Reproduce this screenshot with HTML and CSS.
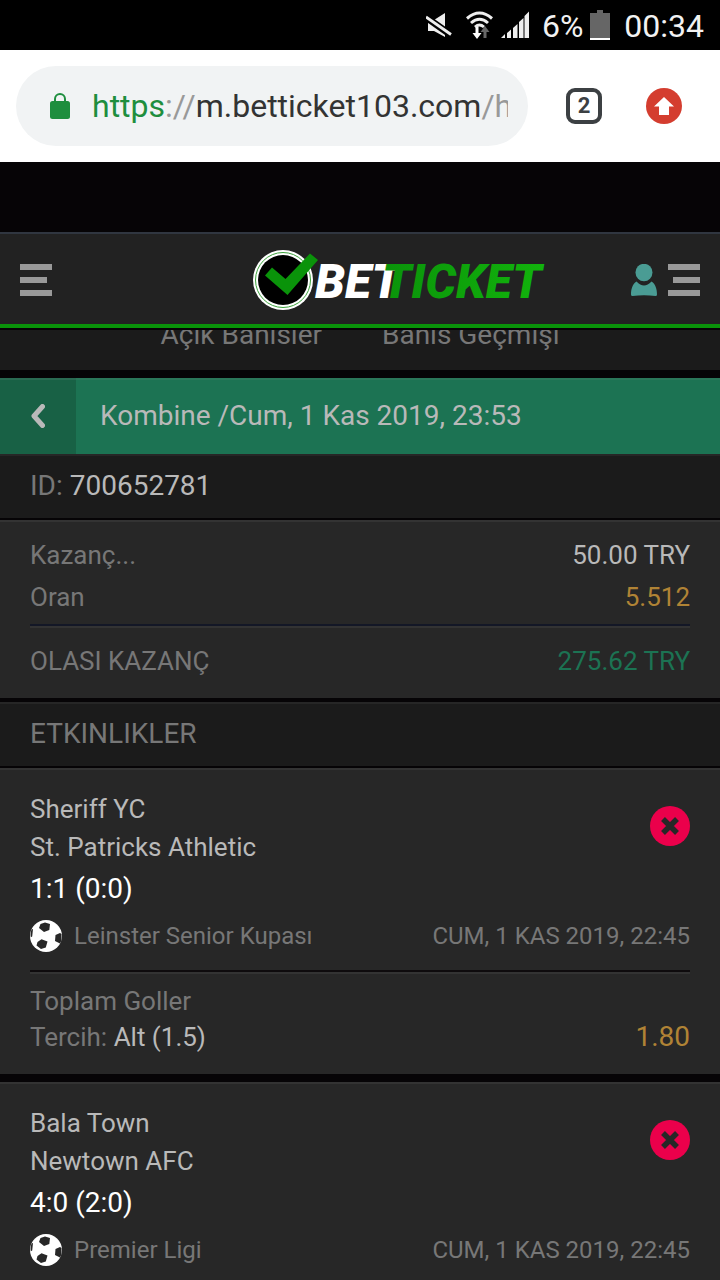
FILE: index.html
```html
<!DOCTYPE html>
<html lang="tr">
<head>
<meta charset="utf-8">
<meta name="viewport" content="width=device-width, initial-scale=1">
<title>Betticket</title>
<link rel="stylesheet" href="styles.css">
</head>
<body>
<svg class="defs" aria-hidden="true">
  <symbol id="ball" viewBox="0 0 32 32">
    <circle cx="16" cy="16" r="16" fill="#fff"/>
    <path d="M10.500 4l4.500-1.500 5 1.500-.7 6-5.300 2-5-4zM25.500 15l4.500-2 1.500 1v6.500l-1.500 3-5-2.500zM7.500 22l4-2.700 6 2.200-1.700 6-4.800 1.500-4.500-3.500zM1.500 9.500l1.500-.5-.8 7.500-1.400.8c-.5-2.500-.1-5 .7-7.800z" fill="#272727"/>
  </symbol>
  <symbol id="lost" viewBox="0 0 40 40">
    <circle cx="20" cy="20" r="20" fill="#eb004b"/>
    <path d="M13 13l14 14M27 13l-14 14" stroke="#272727" stroke-width="5.500"/>
  </symbol>
</svg>

<div class="status">
  <svg width="26" height="26" viewBox="0 0 26 26" aria-label="Sessiz">
    <path d="M2 8h6l11-7v24L8 19H2z" fill="#eee"/>
    <path d="M-1 4.500L25 23" stroke="#000" stroke-width="7"/>
    <path d="M0 5L25 22.500" stroke="#eee" stroke-width="2.800"/>
  </svg>
  <svg class="wifi" width="30" height="30" viewBox="0 0 30 30" aria-label="Wi-Fi">
    <path d="M2 8.500q12.500-11 25 0M6 13q8.500-7.500 17 0M10 17q4.500-4 9 0" fill="none" stroke="#eee" stroke-width="3"/>
    <path d="M10.500 17h3v6h3l-4.500 6-4.500-6h3z" fill="#fff"/>
    <path d="M18.500 28v-6h-3l4.500-6 4.500 6h-3v6z" fill="#666"/>
  </svg>
  <svg class="signal" width="28" height="28" viewBox="0 0 28 28" aria-label="Sinyal">
    <path d="M0 27l4-4v4zM6 22l4-3.500V27H6zM12 17l4.500-4V27H12zM18 11l4.500-4v20H18zM23.500 5l4.500-4.500V27h-4.500z" fill="#eee"/>
  </svg>
  <span class="charge">6%</span>
  <svg width="20" height="30" viewBox="0 0 20 30" aria-label="Pil">
    <path d="M7 0h6v3h7v25H0V3h7z" fill="#666"/><path d="M0 28h20v2H0z" fill="#fff"/>
  </svg>
  <time class="clock">00:34</time>
</div>

<div class="browser">
  <button class="address" type="button">
    <svg width="20" height="26" viewBox="0 0 20 26" aria-hidden="true">
      <path d="M5 10V6a5 5 0 0 1 10 0v4" fill="none" stroke="#1e8e3e" stroke-width="2"/>
      <rect y="8" width="20" height="18" rx="2.500" fill="#1e8e3e"/>
    </svg>
    <span class="url"><span class="secure">https</span><span class="faint">://</span>m.betticket103.com<span class="faint">/h</span></span>
  </button>
  <button class="tab-count" type="button" aria-label="Sekmeler">2</button>
  <button class="update" type="button" aria-label="Güncelle">
    <svg width="36" height="36" viewBox="0 0 36 36"><circle cx="18" cy="18" r="18" fill="#d43d2f"/><path d="M18 9l10 9.500h-5V27H13v-8.500H8z" fill="#fff"/></svg>
  </button>
</div>

<header class="site-head">
  <button class="icon-btn" type="button" aria-label="Menü">
    <svg width="32" height="32" viewBox="0 0 32 32"><path d="M0 0h32v6H0zM0 13h27v6H0zM0 26h32v6H0z" fill="#999"/></svg>
  </button>
  <a class="logo" href="#" aria-label="Betticket">
    <svg width="294" height="62" viewBox="0 0 294 62">
      <defs><linearGradient id="green"><stop offset="0" stop-color="#0a930a"/><stop offset="1" stop-color="#12b30c"/></linearGradient></defs>
      <circle cx="31" cy="31" r="30" fill="#fff"/>
      <circle cx="31" cy="31" r="27.500" fill="none" stroke="#3ca33c" stroke-width="1"/>
      <circle cx="31" cy="31" r="25" fill="#000"/>
      <path d="M13 26.500l7-8L33.500 30 58 4.500l8 6.500L35.500 46z" fill="#0a930a"/>
      <text class="logo-text" x="63" y="49" fill="#fff">BET</text>
      <text class="logo-text" x="130" y="49" fill="url(#green)">TICKET</text>
    </svg>
  </a>
  <div class="head-right">
    <button class="icon-btn" type="button" aria-label="Hesap">
      <svg width="26" height="32" viewBox="0 0 26 32"><ellipse cx="13" cy="8.500" rx="8.500" ry="8.700" fill="#4a9c94"/><path d="M5.500 17.500q7.500 8 15 0C24.500 20 26 25 26 30.500q0 1.500-1.500 1.500-11.500-1.500-23 0Q0 32 0 30.500C0 25 1.500 20 5.500 17.500z" fill="#4a9c94"/></svg>
    </button>
    <button class="icon-btn" type="button" aria-label="Seçenekler">
      <svg width="32" height="32" viewBox="0 0 32 32"><path d="M0 0h32v6H0zM5 13h27v6H5zM0 26h32v6H0z" fill="#999"/></svg>
    </button>
  </div>
</header>

<nav class="tabs"><a href="#">Açık Bahisler</a><a href="#">Bahis Geçmişi</a></nav>

<main class="ticket">
  <div class="ticket-head">
    <button class="back" type="button" aria-label="Geri">
      <svg width="14" height="24" viewBox="0 0 14 24"><path d="M11.500 2.500L3 12l8.500 9.500" fill="none" stroke="#b9b9b9" stroke-width="5" stroke-linecap="round" stroke-linejoin="round"/></svg>
    </button>
    <h1>Kombine /Cum, 1 Kas 2019, 23:53</h1>
  </div>
  <p class="bar">ID: <span class="light">700652781</span></p>

  <dl class="summary panel">
    <div class="row"><dt>Kazanç...</dt><dd class="light">50.00 TRY</dd></div>
    <div class="row"><dt>Oran</dt><dd class="gold">5.512</dd></div>
    <div class="row total"><dt>OLASI KAZANÇ</dt><dd class="green">275.62 TRY</dd></div>
  </dl>

  <h2 class="bar heading">ETKINLIKLER</h2>

  <article class="event panel">
    <div class="match">
      <div class="light"><div>Sheriff YC</div><div>St. Patricks Athletic</div></div>
      <svg class="result" width="40" height="40" role="img" aria-label="Kaybetti"><use href="#lost"/></svg>
    </div>
    <div class="score">1:1 (0:0)</div>
    <div class="league"><svg width="32" height="32" aria-hidden="true"><use href="#ball"/></svg><span>Leinster Senior Kupası</span><time>CUM, 1 KAS 2019, 22:45</time></div>
    <div class="pick">
      <div><div>Toplam Goller</div><div>Tercih: <span class="light">Alt (1.5)</span></div></div>
      <div class="odds gold">1.80</div>
    </div>
  </article>

  <article class="event panel last">
    <div class="match">
      <div class="light"><div>Bala Town</div><div>Newtown AFC</div></div>
      <svg class="result" width="40" height="40" role="img" aria-label="Kaybetti"><use href="#lost"/></svg>
    </div>
    <div class="score">4:0 (2:0)</div>
    <div class="league"><svg width="32" height="32" aria-hidden="true"><use href="#ball"/></svg><span>Premier Ligi</span><time>CUM, 1 KAS 2019, 22:45</time></div>
  </article>
</main>
</body>
</html>
```

FILE: styles.css
```css
* { box-sizing: border-box; }
body {
  margin: 0;
  min-height: 100vh;
  display: flex;
  flex-direction: column;
  background: #060406;
  color: #777;
  font: 26px/36px Roboto, "Liberation Sans", sans-serif;
}
h1, h2, p, dl, dd { margin: 0; font-weight: 400; }
button { padding: 0; border: 0; background: none; font: inherit; color: inherit; }
a { color: inherit; text-decoration: none; }
svg { display: block; flex: none; }
.defs { position: absolute; width: 0; height: 0; }

.light { color: #b9b9b9; }
.gold { color: #b08335; }
.green { color: #1c7353; }

.status {
  display: flex;
  align-items: center;
  justify-content: flex-end;
  height: 50px;
  padding-right: 16px;
  background: #000;
  color: #f2f2f2;
}
.wifi { margin-left: 13px; }
.signal { margin-left: 6px; }
.charge { margin: 2px 7px 0 13px; font-size: 32px; }
.clock { margin: 2px 0 0 14px; font-size: 32px; }

.browser {
  display: flex;
  align-items: center;
  height: 112px;
  padding: 0 38px 0 16px;
  background: #fff;
}
.address {
  flex: 1;
  min-width: 0;
  display: flex;
  align-items: center;
  gap: 22px;
  height: 80px;
  padding: 0 20px 0 34px;
  border-radius: 40px;
  background: #f1f3f4;
  color: #333;
  text-align: left;
}
.url { flex: 1; overflow: hidden; white-space: nowrap; font-size: 32px; line-height: 44px; }
.secure { color: #1e8e3e; }
.faint { color: #999; }
.tab-count {
  width: 36px;
  height: 36px;
  margin: 0 44px 0 38px;
  border: 4px solid #3c4043;
  border-radius: 9px;
  color: #3c4043;
  font-size: 22px;
  font-weight: 700;
  line-height: 28px;
}

.site-head {
  display: grid;
  grid-template-columns: 3fr auto 2fr;
  align-items: center;
  height: 96px;
  margin-top: 70px;
  padding: 2px 20px 0;
  border-top: 2px solid #303640;
  border-bottom: 4px solid #0a930a;
  background: #222;
}
.icon-btn { justify-self: start; }
.logo-text { font: italic 900 48px Roboto, "Liberation Sans", sans-serif; }
.head-right { display: flex; justify-content: flex-end; gap: 11px; }

.tabs {
  display: flex;
  justify-content: center;
  align-items: flex-end;
  gap: 60px;
  height: 40px;
  margin: 2px 0 8px;
  padding-bottom: 17px;
  overflow: hidden;
  background: #1b1b1b;
  font-size: 28px;
}

.ticket { flex: 1; display: flex; flex-direction: column; }
.ticket-head {
  display: flex;
  height: 76px;
  background: #1c7353;
  box-shadow: inset 0 2px #2a7659;
}
.back { display: grid; place-items: center; width: 76px; background: #186145; box-shadow: inset 0 2px #2a6a52; }
.ticket-head h1 { padding-left: 24px; color: #b9b9b9; font-size: 28px; line-height: 76px; }

.bar {
  padding: 0 30px;
  background: #1b1b1b;
  box-shadow: inset 0 2px #262626;
  font-size: 28px;
  line-height: 64px;
}
.heading { margin-top: 4px; }
.panel { background: #272727; border-top: 2px solid #333; }
.bar + .panel { margin-top: 2px; }

.summary { padding: 12px 30px 16px; line-height: 42px; }
.row { display: flex; justify-content: space-between; }
.total { margin-top: 6px; padding-top: 14px; border-top: 2px solid #131726; box-shadow: inset 0 2px #333; }

.event { padding: 20px 30px 19px; }
.event + .event { margin-top: 8px; }
.event.last { flex: 1; padding-bottom: 0; }
.match { display: flex; justify-content: space-between; line-height: 38px; }
.result { margin-top: 16px; }
.score { color: #fff; font-size: 28px; line-height: 46px; }
.league { display: flex; align-items: center; gap: 12px; font-size: 24px; line-height: 48px; }
.league time { margin-left: auto; }
.pick {
  display: flex;
  justify-content: space-between;
  align-items: flex-end;
  margin-top: 10px;
  padding-top: 11px;
  border-top: 2px solid #0e0b0d;
  box-shadow: inset 0 2px #333;
}
.odds { font-size: 28px; }
```
